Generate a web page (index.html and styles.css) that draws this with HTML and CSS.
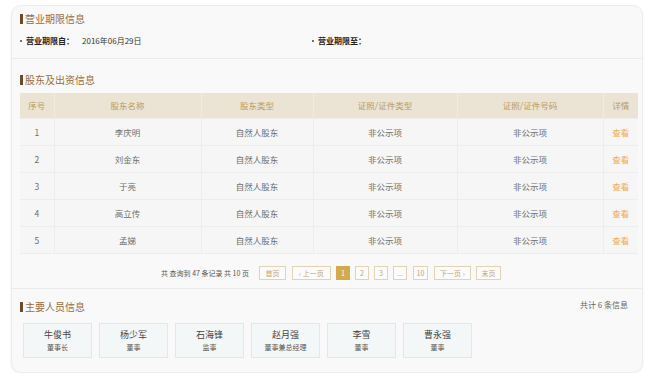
FILE: index.html
```html
<!DOCTYPE html>
<html lang="zh-CN">
<head>
<meta charset="utf-8">
<title>企业信息</title>
<link rel="stylesheet" href="styles.css">
</head>
<body>
<div class="card">
  <section class="sec sec-period">
    <h2 class="sec-title">营业期限信息</h2>
    <div class="period-row">
      <div class="period-item"><span class="dot"></span><b>营业期限自：</b><span class="val">2016年06月29日</span></div>
      <div class="period-item"><span class="dot"></span><b>营业期限至：</b></div>
    </div>
  </section>

  <section class="sec sec-holders">
    <h2 class="sec-title">股东及出资信息</h2>
    <table class="tbl">
      <colgroup>
        <col class="c1"><col class="c2"><col class="c3"><col class="c4"><col class="c5"><col class="c6">
      </colgroup>
      <thead>
        <tr><th>序号</th><th>股东名称</th><th>股东类型</th><th>证照/证件类型</th><th>证照/证件号码</th><th>详情</th></tr>
      </thead>
      <tbody>
        <tr><td>1</td><td>李庆明</td><td>自然人股东</td><td>非公示项</td><td>非公示项</td><td><a class="link">查看</a></td></tr>
        <tr><td>2</td><td>刘金东</td><td>自然人股东</td><td>非公示项</td><td>非公示项</td><td><a class="link">查看</a></td></tr>
        <tr><td>3</td><td>于亮</td><td>自然人股东</td><td>非公示项</td><td>非公示项</td><td><a class="link">查看</a></td></tr>
        <tr><td>4</td><td>高立传</td><td>自然人股东</td><td>非公示项</td><td>非公示项</td><td><a class="link">查看</a></td></tr>
        <tr><td>5</td><td>孟娣</td><td>自然人股东</td><td>非公示项</td><td>非公示项</td><td><a class="link">查看</a></td></tr>
      </tbody>
    </table>
    <div class="pager">
      <span class="pager-info">共 查询到 47 条记录 共 10 页</span>
      <span class="pbtn w-first">首页</span>
      <span class="pbtn w-prev">‹ 上一页</span>
      <span class="pbtn num active">1</span>
      <span class="pbtn num">2</span>
      <span class="pbtn num">3</span>
      <span class="pbtn num">...</span>
      <span class="pbtn num">10</span>
      <span class="pbtn w-next">下一页 ›</span>
      <span class="pbtn w-last">末页</span>
    </div>
  </section>

  <section class="sec sec-staff">
    <div class="staff-head">
      <h2 class="sec-title">主要人员信息</h2>
      <span class="staff-count">共计 6 条信息</span>
    </div>
    <div class="staff-list">
      <div class="person"><div class="pname">牛俊书</div><div class="prole">董事长</div></div>
      <div class="person"><div class="pname">杨少军</div><div class="prole">董事</div></div>
      <div class="person"><div class="pname">石海锋</div><div class="prole">监事</div></div>
      <div class="person"><div class="pname">赵月强</div><div class="prole">董事兼总经理</div></div>
      <div class="person"><div class="pname">李雪</div><div class="prole">董事</div></div>
      <div class="person"><div class="pname">曹永强</div><div class="prole">董事</div></div>
    </div>
  </section>
</div>
</body>
</html>
```

FILE: styles.css
```css
* { box-sizing: border-box; }
html, body {
  margin: 0;
  padding: 0;
  background: #ffffff;
}
body {
  font-family: "Noto Sans CJK SC", "Liberation Sans", sans-serif;
  color: #555;
}
.card {
  margin: 5px 0 0 11px;
  width: 632px;
  height: 368px;
  background: #f9f9f9;
  border: 1px solid #ececec;
  border-radius: 10px;
  box-shadow: 0 1px 3px rgba(0,0,0,0.05);
  overflow: hidden;
}
.sec {
  padding-left: 8px;
}
.sec + .sec {
  border-top: 1px solid #ebebeb;
}
.sec-title {
  margin: 0;
  display: flex;
  align-items: center;
  font-size: 10px;
  line-height: 12px;
  font-weight: normal;
  color: #9a6a3c;
}
.sec-title::before {
  content: "";
  width: 3px;
  height: 10px;
  background: #6e4a26;
  margin-right: 2px;
}

/* period */
.sec-period {
  padding-top: 7px;
  padding-bottom: 11px;
}
.period-row {
  display: flex;
  margin-top: 10px;
  font-size: 8px;
  line-height: 12px;
}
.period-item {
  display: flex;
  align-items: center;
}
.period-item:first-child {
  width: 292px;
}
.dot {
  width: 2px;
  height: 2px;
  border-radius: 1px;
  background: #444;
  margin-right: 4px;
}
.period-item b {
  color: #222;
  font-weight: bold;
}
.val {
  margin-left: 8px;
  color: #333;
}

/* holders */
.sec-holders {
  padding-top: 15px;
  padding-bottom: 8px;
}
.tbl {
  margin-top: 7px;
  width: 618px;
  border-collapse: collapse;
  table-layout: fixed;
  font-size: 8.5px;
}
.c1 { width: 34px; }
.c2 { width: 147px; }
.c3 { width: 112px; }
.c4 { width: 144px; }
.c5 { width: 146px; }
.c6 { width: 35px; }
.tbl th {
  height: 25px;
  background: #ebe3d4;
  color: #bb9b5e;
  font-weight: normal;
  text-align: center;
  border-left: 1px solid #f1ebe0;
  padding: 0;
}
.tbl th:first-child { border-left: none; }
.tbl td {
  height: 27px;
  background: #f6f6f6;
  color: #6e6e6e;
  text-align: center;
  border: 1px solid #ededed;
  padding: 0;
}
.tbl tr td:first-child { border-left: none; }
.tbl tr td:last-child { border-right: none; }
.link {
  color: #f2a94f;
}

.pager {
  display: flex;
  align-items: center;
  margin-top: 12px;
  margin-left: 141px;
  height: 14px;
  font-size: 7px;
}
.pager-info {
  color: #555;
  margin-right: 10px;
}
.pbtn {
  display: flex;
  align-items: center;
  justify-content: center;
  height: 14px;
  border: 1px solid #e2d3b6;
  background: #fbfbfb;
  color: #c5a66c;
  margin-right: 5px;
}
.w-first { width: 27px; margin-right: 6px; }
.w-prev { width: 39px; }
.num { width: 14px; }
.pbtn.num:nth-child(7) { margin-right: 6px; }
.pbtn.num:nth-child(8) { width: 15px; margin-right: 6px; }
.w-next { width: 37px; margin-right: 5px; }
.w-last { width: 25px; }
.active {
  background: #d5a94c;
  border-color: #d5a94c;
  color: #fff;
}

/* staff */
.sec-staff {
  padding-top: 12px;
  padding-right: 14px;
}
.staff-head {
  display: flex;
  justify-content: space-between;
  align-items: center;
}
.staff-count {
  font-size: 8px;
  color: #666;
  line-height: 12px;
  margin-top: -3px;
}
.staff-list {
  display: flex;
  gap: 7px;
  margin-top: 10px;
  margin-left: 3px;
}
.person {
  width: 69px;
  height: 35px;
  background: #f4f7f8;
  border: 1px solid #e2e7e9;
  display: flex;
  flex-direction: column;
  align-items: center;
  justify-content: center;
}
.pname {
  font-size: 9px;
  line-height: 12px;
  color: #444;
}
.prole {
  font-size: 7px;
  line-height: 10px;
  color: #555;
  margin-top: 1px;
}
```
